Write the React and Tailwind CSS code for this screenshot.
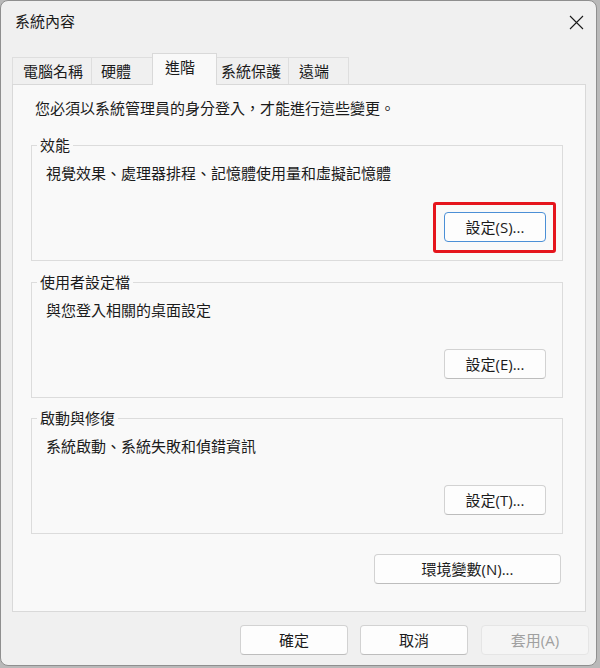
const tabs = [
  { label: "電腦名稱", w: "w-[80px]", pl: "pl-[10px]" },
  { label: "硬體", w: "w-[62px]", pl: "pl-[9px]" },
  { label: "進階", w: "w-[65px]", pl: "pl-[12px]", active: true },
  { label: "系統保護", w: "w-[73px]", pl: "pl-[4px]" },
  { label: "遠端", w: "w-[61px]", pl: "pl-[10px]" },
];

const groups = [
  { title: "效能", desc: "視覺效果、處理器排程、記憶體使用量和虛擬記憶體", btn: "設定(S)...", focus: true },
  { title: "使用者設定檔", desc: "與您登入相關的桌面設定", btn: "設定(E)..." },
  { title: "啟動與修復", desc: "系統啟動、系統失敗和偵錯資訊", btn: "設定(T)..." },
];

function WinButton({ children, className = "", focus = false, disabled = false }) {
  return (
    <button
      className={
        "h-[30px] rounded-[4px] border text-[15px] leading-[20px] " +
        (disabled
          ? "border-[#e5e5e5] bg-[#f5f5f5] text-[#a0a0a0] "
          : focus
          ? "border-[#4b8fd6] bg-[#fdfdfd] text-[#1b1b1b] "
          : "border-[#d2d2d2] border-b-[#bdbdbd] bg-[#fdfdfd] text-[#1b1b1b] ") +
        className
      }
    >
      {children}
    </button>
  );
}

function Group({ title, desc, btn, focus, className = "" }) {
  return (
    <div className={"mx-[18px] mr-[22px] flex flex-col border border-[#dcdcdc] pb-[18px] " + className}>
      <div className="-mt-[11px] ml-[5px] w-fit bg-[#f9f9f9] px-[3px] leading-[20px]">{title}</div>
      <div className="mt-[8px] pl-[14px] leading-[20px]">{desc}</div>
      <div className="mt-[29px] flex justify-end pr-[16px]">
        <div className="relative">
          <WinButton focus={focus} className="w-[102px]">{btn}</WinButton>
          {focus && (
            <span className="pointer-events-none absolute -left-[11px] -right-[10px] -top-[10px] -bottom-[11px] rounded-[3px] border-[3px] border-[#e5151d]" />
          )}
        </div>
      </div>
    </div>
  );
}

export default function App() {
  return (
    <div className="h-[668px] w-[600px] bg-[#b9b9b9] font-['Open_Sans','Noto_Sans_CJK_TC',sans-serif] text-[15px] text-[#1b1b1b]">
      <div className="flex h-[666px] w-[597px] flex-col overflow-hidden rounded-[8px] border border-[#8f8f8f] bg-[#f0f0f0]">
        {/* Title bar */}
        <div className="flex h-[52px] items-start justify-between">
          <div className="ml-[14px] mt-[10px] leading-[20px]">系統內容</div>
          <svg className="mr-[12px] mt-[14px]" width="15" height="15" viewBox="0 0 15 15">
            <path d="M1 1 L14 14 M14 1 L1 14" stroke="#1b1b1b" strokeWidth="1.1" fill="none" />
          </svg>
        </div>

        {/* Tabs */}
        <div className="flex h-[31px] items-start pl-[11px]">
          {tabs.map((t, i) =>
            t.active ? (
              <div
                key={i}
                className={"relative z-10 -ml-px h-[32px] border border-b-0 border-[#d9d9d9] bg-[#f9f9f9] pt-[3px] leading-[20px] " + t.w + " " + t.pl}
              >
                {t.label}
              </div>
            ) : (
              <div
                key={i}
                className={"mt-[4px] h-[27px] border border-b-0 border-[#dedede] bg-[#f0f0f0] pt-[3px] leading-[20px] " + (i > 0 ? "-ml-px " : "") + t.w + " " + t.pl}
              >
                {t.label}
              </div>
            )
          )}
        </div>

        {/* Panel */}
        <div className="ml-[11px] mr-[10px] flex flex-col border border-[#d9d9d9] bg-[#f9f9f9] pb-[27px]">
          <div className="mt-[13px] pl-[22px] leading-[20px]">您必須以系統管理員的身分登入，才能進行這些變更。</div>
          <Group {...groups[0]} className="mt-[27px]" />
          <Group {...groups[1]} className="mt-[21px]" />
          <Group {...groups[2]} className="mt-[20px]" />
          <div className="mt-[20px] flex justify-end pr-[24px]">
            <WinButton className="w-[187px]">環境變數(N)...</WinButton>
          </div>
        </div>

        {/* Footer */}
        <div className="mt-[13px] flex justify-end gap-[12px] pr-[7px]">
          <WinButton className="w-[108px]">確定</WinButton>
          <WinButton className="w-[108px]">取消</WinButton>
          <WinButton disabled className="ml-px w-[108px]">套用(A)</WinButton>
        </div>
      </div>
    </div>
  );
}
